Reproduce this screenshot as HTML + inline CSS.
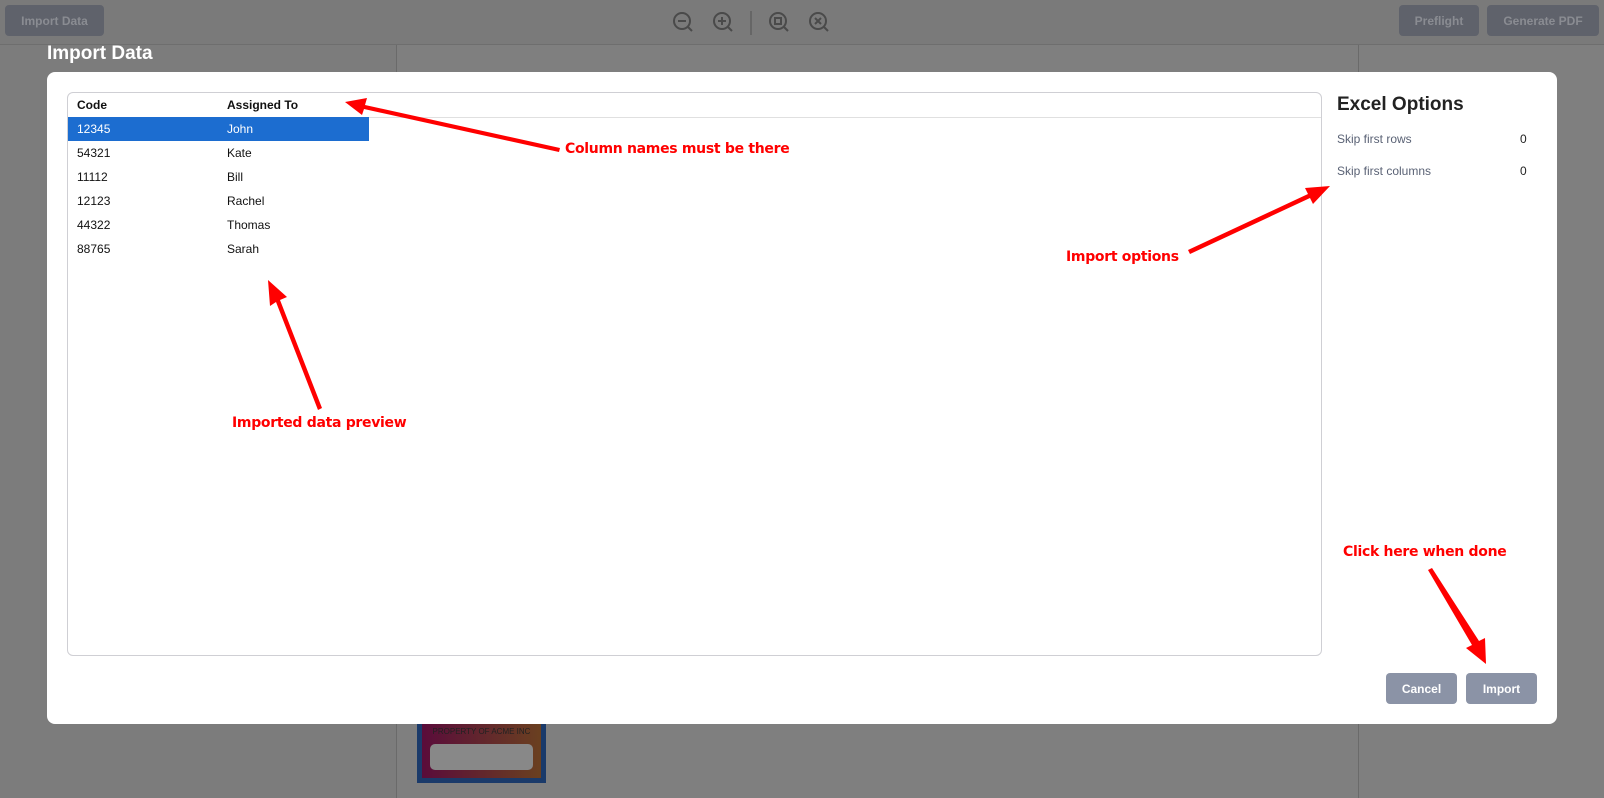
<!DOCTYPE html>
<html><head><style>
*{margin:0;padding:0;box-sizing:border-box}
body{width:1604px;height:798px;overflow:hidden;background:#7f7f7f;font-family:"Liberation Sans",Arial,sans-serif;position:relative}
.abs{position:absolute}
.btn{position:absolute;background:#5f626b;color:#8a8c92;font-weight:bold;font-size:12px;border-radius:4px;display:flex;align-items:center;justify-content:center}
.row{position:absolute;left:0;height:24px;width:301px;font-size:12px;color:#111;line-height:24px}
.row span{position:absolute}
.row .a{left:9px}.row .b{left:159px}
.note{position:absolute;color:#f00;font-weight:bold;font-size:14px;text-shadow:1px 1px 1px #fff,-1px -1px 1px #fff,1px -1px 1px #fff,-1px 1px 1px #fff;font-family:"DejaVu Sans",sans-serif;letter-spacing:-0.3px}
</style></head><body>
<div class="abs" style="left:0;top:0;width:1604px;height:45px;background:#7a7a7a;border-bottom:1px solid #6e6e6e"></div>
<div class="btn" style="left:5px;top:5px;width:99px;height:31px">Import Data</div>
<div class="btn" style="left:1399px;top:5px;width:80px;height:31px">Preflight</div>
<div class="btn" style="left:1487px;top:5px;width:112px;height:31px">Generate PDF</div>
<svg class="abs" style="left:665px;top:8px" width="170" height="30" fill="none" stroke="#4a4a4a" stroke-width="2">
<circle cx="17" cy="13" r="8"/><path d="M13 13h8M23 19l4 4"/>
<circle cx="57" cy="13" r="8"/><path d="M53 13h8M57 9v8M63 19l4 4"/>
<path d="M86 3v24" stroke="#666"/>
<circle cx="113" cy="13" r="8"/><rect x="110" y="10" width="6" height="6"/><path d="M119 19l4 4"/>
<circle cx="153" cy="13" r="8"/><path d="M150 10l6 6M156 10l-6 6M159 19l4 4"/>
</svg>
<div class="abs" style="left:396px;top:45px;width:1px;height:753px;background:#6a6a6a"></div>
<div class="abs" style="left:1358px;top:45px;width:1px;height:753px;background:#6a6a6a"></div>
<div class="abs" style="left:0;top:45px;width:396px;height:753px;background:#7c7c7c"></div>
<div class="abs" style="left:47px;top:43px;color:#fff;font-size:19px;font-weight:bold">Import Data</div>
<div class="abs" style="left:417px;top:715px;width:129px;height:68px;background:linear-gradient(90deg,#5a0c3a,#6a4020);border:5px solid #1a3a6a;border-top:none">
<div style="text-align:center;font-size:8px;color:#222;margin-top:12px">PROPERTY OF ACME INC</div>
<div style="margin:8px auto 0;width:103px;height:26px;background:#888;border-radius:5px"></div></div>
<div class="abs" style="left:47px;top:72px;width:1510px;height:652px;background:#fff;border-radius:8px"></div>
<div class="abs" style="left:67px;top:92px;width:1255px;height:564px;border:1px solid #cfcfd4;border-radius:6px;overflow:hidden">
<div style="position:absolute;left:0;top:0;width:100%;height:25px;border-bottom:1px solid #e0e0e0"></div>
<div class="row" style="top:0;font-weight:bold"><span class="a">Code</span><span class="b">Assigned To</span></div>
<div class="row" style="top:24px;background:#1c6dd0;color:#fff"><span class="a">12345</span><span class="b">John</span></div>
<div class="row" style="top:48px"><span class="a">54321</span><span class="b">Kate</span></div>
<div class="row" style="top:72px"><span class="a">11112</span><span class="b">Bill</span></div>
<div class="row" style="top:96px"><span class="a">12123</span><span class="b">Rachel</span></div>
<div class="row" style="top:120px"><span class="a">44322</span><span class="b">Thomas</span></div>
<div class="row" style="top:144px"><span class="a">88765</span><span class="b">Sarah</span></div>
</div>
<div class="abs" style="left:1337px;top:94px;font-size:19px;font-weight:bold;color:#222">Excel Options</div>
<div class="abs" style="left:1337px;top:132px;font-size:12px;color:#5a6275">Skip first rows</div>
<div class="abs" style="left:1520px;top:132px;font-size:12px;color:#222">0</div>
<div class="abs" style="left:1337px;top:164px;font-size:12px;color:#5a6275">Skip first columns</div>
<div class="abs" style="left:1520px;top:164px;font-size:12px;color:#222">0</div>
<div class="btn" style="left:1386px;top:673px;width:71px;height:31px;background:#8b93a6;color:#fff">Cancel</div>
<div class="btn" style="left:1466px;top:673px;width:71px;height:31px;background:#8b93a6;color:#fff">Import</div>
<svg class="abs" style="left:0;top:0" width="1604" height="798" fill="#f00" stroke="none">
<path d="M560 148 L365 105 L367 98 L345 102 L362 115 L364 109 L559 152Z"/>
<path d="M322 408 L280 300 L287 297 L268 280 L270 306 L276 302 L318 410Z"/>
<path d="M1190 254 L1310 198 L1313 204 L1330 186 L1305 188 L1308 194 L1188 250Z"/>
<path d="M1428 570 L1472 645 L1466 648 L1486 664 L1485 638 L1479 641 L1432 568Z"/>
</svg>
<div class="note" style="left:565px;top:141px">Column names must be there</div>
<div class="note" style="left:1066px;top:249px">Import options</div>
<div class="note" style="left:232px;top:415px">Imported data preview</div>
<div class="note" style="left:1343px;top:544px">Click here when done</div>
</body></html>
